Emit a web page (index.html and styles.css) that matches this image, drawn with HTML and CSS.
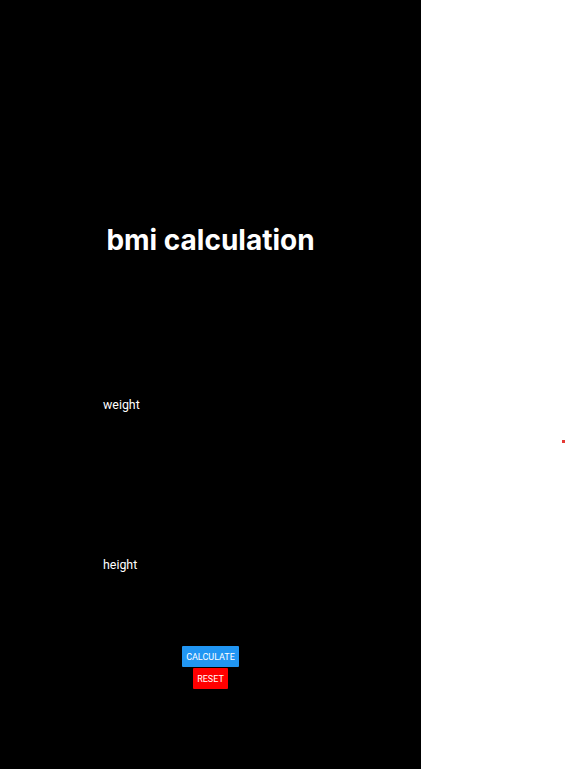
FILE: index.html
```html
<!DOCTYPE html>
<html>
<head>
<meta charset="utf-8">
<link rel="stylesheet" href="styles.css">
</head>
<body>
<div class="page">
  <main class="panel">
    <h1 class="title">bmi calculation</h1>
    <div class="field field-weight">
      <label class="label">weight</label>
    </div>
    <div class="field field-height">
      <label class="label">height</label>
    </div>
    <div class="actions">
      <button class="btn btn-calc">CALCULATE</button>
      <button class="btn btn-reset">RESET</button>
    </div>
  </main>
  <aside class="side"></aside>
</div>
<span class="dot"></span>
</body>
</html>
```
FILE: styles.css
```css
html, body {
  margin: 0;
  padding: 0;
  background: #ffffff;
  font-family: Roboto, "Liberation Sans", sans-serif;
}
.page {
  display: flex;
  height: 769px;
}
.panel {
  width: 421px;
  background: #000000;
  color: #ffffff;
  display: flex;
  flex-direction: column;
  padding-top: 224px;
  box-sizing: border-box;
}
.side {
  flex: 1;
  background: #ffffff;
}
.title {
  margin: 0;
  font-family: Inter, Roboto, sans-serif;
  font-size: 28px;
  font-weight: 700;
  line-height: 33px;
  text-align: center;
}
.field {
  padding-left: 103px;
}
.field-weight {
  margin-top: 140px;
}
.field-height {
  margin-top: 145px;
}
.label {
  font-size: 12.4px;
  line-height: 15px;
  display: block;
}
.actions {
  margin-top: 74px;
  display: flex;
  flex-direction: column;
  align-items: center;
}
.btn {
  border: none;
  margin: 0;
  color: #ffffff;
  font-family: Roboto, "Liberation Sans", sans-serif;
  font-size: 9px;
  height: 21px;
  padding: 0 4px;
  border-radius: 1px;
}
.btn-calc {
  background: #2196f3;
}
.btn-reset {
  background: #ff0000;
  margin-top: 1px;
}
.dot {
  position: absolute;
  left: 562px;
  top: 440px;
  width: 3px;
  height: 3px;
  background: #e53935;
}
```
